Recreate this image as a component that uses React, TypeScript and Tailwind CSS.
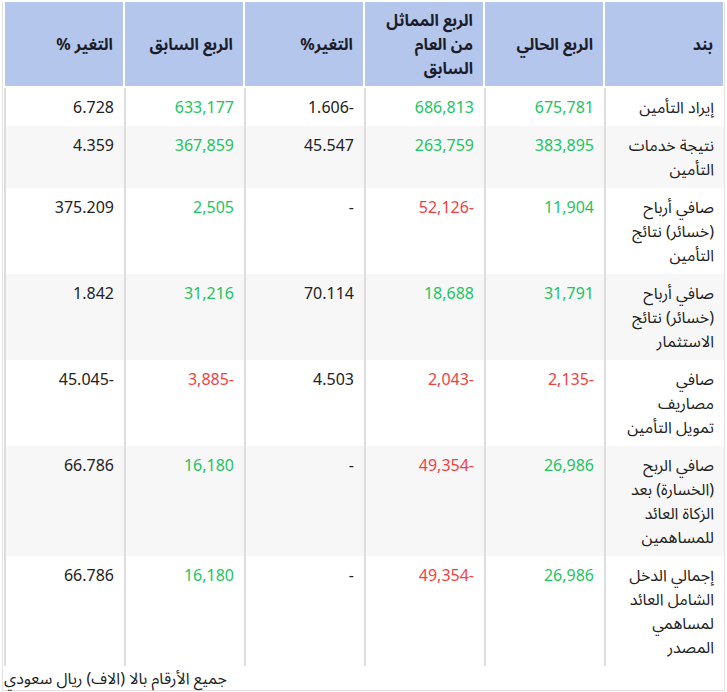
import React from "react";

type Cell = { v: string; c?: "g" | "r" };
type Row = { label: string[]; cells: Cell[] };

const headers: string[][] = [
  ["بند"],
  ["الربع الحالي"],
  ["الربع المماثل", "من العام", "السابق"],
  ["التغير%"],
  ["الربع السابق"],
  ["التغير %"],
];

const rows: Row[] = [
  {
    label: ["إيراد التأمين"],
    cells: [{ v: "675,781", c: "g" }, { v: "686,813", c: "g" }, { v: "1.606-" }, { v: "633,177", c: "g" }, { v: "6.728" }],
  },
  {
    label: ["نتيجة خدمات", "التأمين"],
    cells: [{ v: "383,895", c: "g" }, { v: "263,759", c: "g" }, { v: "45.547" }, { v: "367,859", c: "g" }, { v: "4.359" }],
  },
  {
    label: ["صافي أرباح", "(خسائر) نتائج", "التأمين"],
    cells: [{ v: "11,904", c: "g" }, { v: "52,126-", c: "r" }, { v: "-" }, { v: "2,505", c: "g" }, { v: "375.209" }],
  },
  {
    label: ["صافي أرباح", "(خسائر) نتائج", "الاستثمار"],
    cells: [{ v: "31,791", c: "g" }, { v: "18,688", c: "g" }, { v: "70.114" }, { v: "31,216", c: "g" }, { v: "1.842" }],
  },
  {
    label: ["صافي", "مصاريف", "تمويل التأمين"],
    cells: [{ v: "2,135-", c: "r" }, { v: "2,043-", c: "r" }, { v: "4.503" }, { v: "3,885-", c: "r" }, { v: "45.045-" }],
  },
  {
    label: ["صافي الربح", "(الخسارة) بعد", "الزكاة العائد", "للمساهمين"],
    cells: [{ v: "26,986", c: "g" }, { v: "49,354-", c: "r" }, { v: "-" }, { v: "16,180", c: "g" }, { v: "66.786" }],
  },
  {
    label: ["إجمالي الدخل", "الشامل العائد", "لمساهمي", "المصدر"],
    cells: [{ v: "26,986", c: "g" }, { v: "49,354-", c: "r" }, { v: "-" }, { v: "16,180", c: "g" }, { v: "66.786" }],
  },
];

function Lines({ lines }: { lines: string[] }) {
  return (
    <>
      {lines.map((l, i) => (
        <div key={i}>{l}</div>
      ))}
    </>
  );
}

export default function App() {
  return (
    <div
      className="bg-white w-[727px] h-[692px] pt-[2px] pl-[2px] text-[#222222]"
      style={{ fontFamily: '"Noto Sans", "Noto Sans Arabic", "DejaVu Sans", sans-serif' }}
    >
      <div dir="rtl" className="w-[723px] border-r border-l border-b border-[#e2e2e2]">
        <div className="grid grid-cols-[120px_120px_120px_120px_120px_120px] w-[720px] mr-auto">
          {headers.map((h, i) => (
            <div
              key={i}
              className="border-l-2 border-white bg-[#b4c6ec] h-[84px] px-[10px] flex flex-col justify-center text-right font-bold text-[16px] leading-[24px] text-[#1c1c28]"
            >
              <Lines lines={h} />
            </div>
          ))}
        </div>
        <div className="h-[2px]" />
        <div className="w-[720px]">
          {rows.map((r, ri) => (
            <div
              key={ri}
              className={`grid grid-cols-[120px_120px_120px_120px_120px_120px] ${ri % 2 === 1 ? "bg-[#f7f7f7]" : "bg-white"}`}
            >
              <div className="border-l-2 border-[#dddddd] px-[10px] py-[7px] text-right text-[16px] leading-[24px]">
                <Lines lines={r.label} />
              </div>
              {r.cells.map((c, ci) => (
                <div
                  key={ci}
                  className={`border-l-2 border-[#dddddd] px-[10px] py-[7px] text-right text-[16px] leading-[24px] ${
                    c.c === "g" ? "text-[#1ec461]" : c.c === "r" ? "text-[#f23f3f]" : "text-[#222222]"
                  }`}
                >
                  <span dir="ltr">{c.v}</span>
                </div>
              ))}
            </div>
          ))}
        </div>
        <div className="h-[24px] flex items-center justify-end pl-[1px] text-[16px] leading-[24px]">
          <span dir="rtl">جميع الأرقام بالا (الاف) ريال سعودي</span>
        </div>
      </div>
    </div>
  );
}
